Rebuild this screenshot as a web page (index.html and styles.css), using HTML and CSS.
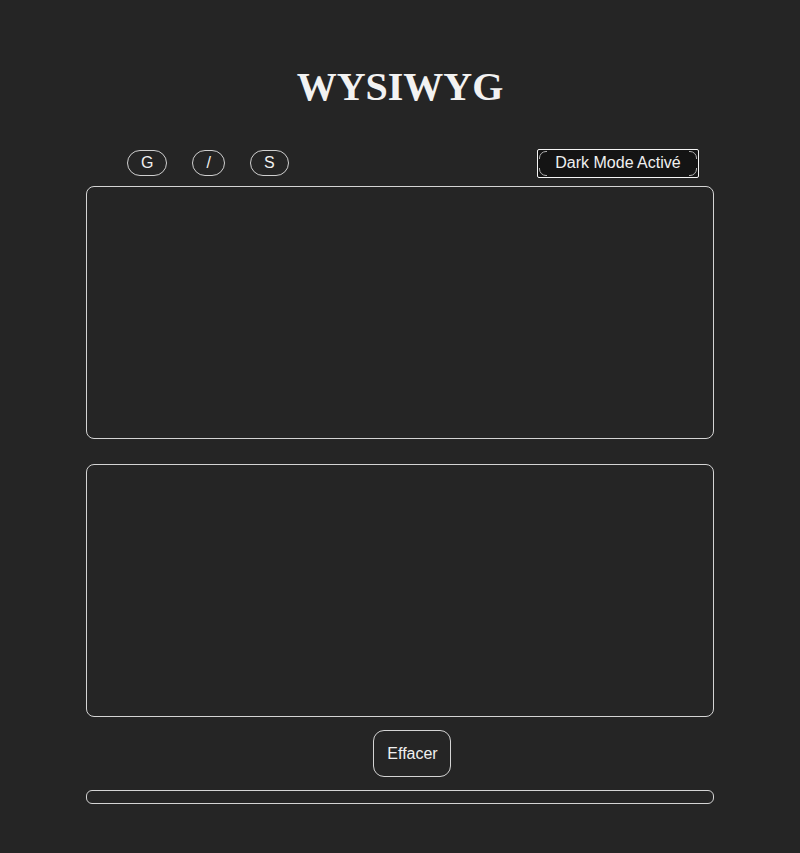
FILE: index.html
```html
<!DOCTYPE html>
<html lang="fr">
<head>
  <meta charset="UTF-8">
  <meta name="viewport" content="width=device-width, initial-scale=1.0">
  <title>WYSIWYG</title>
  <link rel="stylesheet" href="styles.css">
</head>
<body>
  <div class="container">
    <h1>WYSIWYG</h1>

    <div class="toolbar">
      <div class="format-group">
        <button class="fmt">G</button>
        <button class="fmt">/</button>
        <button class="fmt">S</button>
      </div>
      <button class="dark-btn"><span>Dark Mode Activé</span></button>
    </div>

    <div class="editor" contenteditable="true"></div>
    <div class="preview"></div>

    <div class="actions">
      <button class="clear">Effacer</button>
    </div>
    <div class="output"></div>
  </div>
</body>
</html>
```

FILE: styles.css
```css
body { margin: 0; background: #252525; color: #f0f0f0; font-family: "Liberation Sans", Arial, sans-serif; }
.container { width: 628px; margin: 0 auto; padding-top: 64px; }
h1 { font-family: "Liberation Serif", "Times New Roman", serif; font-size: 40px; text-align: center; margin: 0 0 39px; line-height: 46px; color: #f2f2f2; }
button { font-family: "Liberation Sans", Arial, sans-serif; font-size: 16px; color: #f0f0f0; background: transparent; cursor: pointer; }
.toolbar { display: flex; align-items: center; justify-content: space-between; padding: 0 15px 0 41px; height: 28px; }
.format-group { display: flex; gap: 25px; }
.fmt { border: 1px solid #cfcfcf; border-radius: 13px; padding: 3px 13px; line-height: 18px; }
.dark-btn { border: 1px solid #f5f5f5; border-radius: 2px; padding: 1px; background: #141414; }
.dark-btn span { position: relative; display: block; border: 1px solid #b0b0b0; border-radius: 7px; padding: 1px 12px 3px; line-height: 19px; width: 132px; }
.dark-btn span::before { content: ""; position: absolute; left: 7px; right: 7px; top: -1px; bottom: -1px; border-top: 1px solid #141414; border-bottom: 1px solid #141414; }
.dark-btn span::after { content: ""; position: absolute; top: 7px; bottom: 7px; left: -1px; right: -1px; border-left: 1px solid #141414; border-right: 1px solid #141414; }
.editor, .preview { height: 251px; border: 1px solid #d4d4d4; border-radius: 8px; margin-top: 9px; outline: none; }
.preview { margin-top: 25px; }
.actions { display: flex; justify-content: center; margin-top: 13px; }
.clear { border: 1px solid #d4d4d4; border-radius: 11px; padding: 0 12px 0 13px; height: 47px; margin-left: 24px; }
.output { height: 12px; border: 1px solid #d4d4d4; border-radius: 6px; margin-top: 13px; }
```
